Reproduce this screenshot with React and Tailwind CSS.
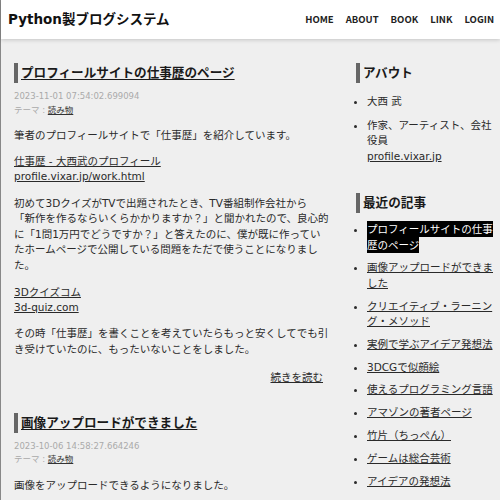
import React from 'react';

const navItems = ['HOME', 'ABOUT', 'BOOK', 'LINK', 'LOGIN'];

const recent = [
  'プロフィールサイトの仕事歴のページ',
  '画像アップロードができました',
  'クリエイティブ・ラーニング・メソッド',
  '実例で学ぶアイデア発想法',
  '3DCGで似顔絵',
  '使えるプログラミング言語',
  'アマゾンの著者ページ',
  '竹片（ちっぺん）',
  'ゲームは総合芸術',
  'アイデアの発想法',
];

function PostTitle({ children }) {
  return (
    <h2 className="border-l-4 border-[#666] pl-[3px] text-[12.6px] font-bold leading-[20px] text-[#1a1a1a]">
      <a href="#" className="underline underline-offset-[2px]">{children}</a>
    </h2>
  );
}

function PostMeta({ date }) {
  return (
    <div className="mt-[7px] text-[8.5px] leading-[13.5px] text-[#aaa]">
      <div>{date}</div>
      <div>
        テーマ : <a href="#" className="text-[#333] underline">読み物</a>
      </div>
    </div>
  );
}

function SideTitle({ children }) {
  return (
    <h3 className="border-l-4 border-[#666] pl-[3px] text-[12.6px] font-bold leading-[20px] text-[#1a1a1a]">
      {children}
    </h3>
  );
}

export default function App() {
  return (
    <div className="min-h-screen bg-[#efefef] border-l border-[#888] text-[#2a2a2a] font-['DejaVu_Sans','Noto_Sans_CJK_JP',sans-serif]">
      <header className="h-[39px] bg-white flex items-center justify-between pl-[7px] pr-[6px] shadow-[0_1px_4px_rgba(0,0,0,0.18)] relative">
        <div className="text-[13.5px] font-bold text-[#111]">Python製ブログシステム</div>
        <nav className="flex gap-[12px] font-['Noto_Sans_CJK_JP',sans-serif] text-[9.5px] font-bold text-[#222]">
          {navItems.map(n => (
            <a key={n} href="#">{n}</a>
          ))}
        </nav>
      </header>

      <div className="flex pt-[24px] pl-[13px]">
        <main className="w-[316px] shrink-0 text-[10.5px] leading-[15.5px]">
          <article>
            <PostTitle>プロフィールサイトの仕事歴のページ</PostTitle>
            <PostMeta date="2023-11-01 07:54:02.699094" />
            <p className="mt-[11px]">筆者のプロフィールサイトで「仕事歴」を紹介しています。</p>
            <p className="mt-[10px] leading-[15px]">
              <a href="#" className="underline">仕事歴 - 大西武のプロフィール</a><br />
              <a href="#" className="underline">profile.vixar.jp/work.html</a>
            </p>
            <p className="mt-[12px]">
              初めて3DクイズがTVで出題されたとき、TV番組制作会社から<br />
              「新作を作るならいくらかかりますか？」と聞かれたので、良心的に「1問1万円でどうですか？」と答えたのに、僕が既に作っていたホームページで公開している問題をただで使うことになりました。
            </p>
            <p className="mt-[12px] leading-[15px]">
              <a href="#" className="underline">3Dクイズコム</a><br />
              <a href="#" className="underline">3d-quiz.com</a>
            </p>
            <p className="mt-[11px]">その時「仕事歴」を書くことを考えていたらもっと安くしてでも引き受けていたのに、もったいないことをしました。</p>
            <p className="mt-[13px] text-right pr-[7px]">
              <a href="#" className="underline">続きを読む</a>
            </p>
          </article>

          <article className="mt-[27px]">
            <PostTitle>画像アップロードができました</PostTitle>
            <PostMeta date="2023-10-06 14:58:27.664246" />
            <p className="mt-[11px]">画像をアップロードできるようになりました。</p>
          </article>
        </main>

        <aside className="ml-[26px] flex-1 text-[10.5px] leading-[15.5px]">
          <section>
            <SideTitle>アバウト</SideTitle>
            <ul className="list-disc pl-[11px] mt-[11px]">
              <li>大西 武</li>
              <li className="mt-[8px]">
                作家、アーティスト、会社役員<br />
                <a href="#" className="underline">profile.vixar.jp</a>
              </li>
            </ul>
          </section>

          <section className="mt-[29px]">
            <SideTitle>最近の記事</SideTitle>
            <ul className="list-disc pl-[11px] mt-[9px]">
              {recent.map((t, i) => (
                <li key={t} className={i === 0 ? '' : 'mt-[7.3px]'}>
                  {i === 0 ? (
                    <span className="bg-black text-white py-[2px]">{t}</span>
                  ) : (
                    <a href="#" className="underline">{t}</a>
                  )}
                </li>
              ))}
            </ul>
          </section>
        </aside>
      </div>
    </div>
  );
}
